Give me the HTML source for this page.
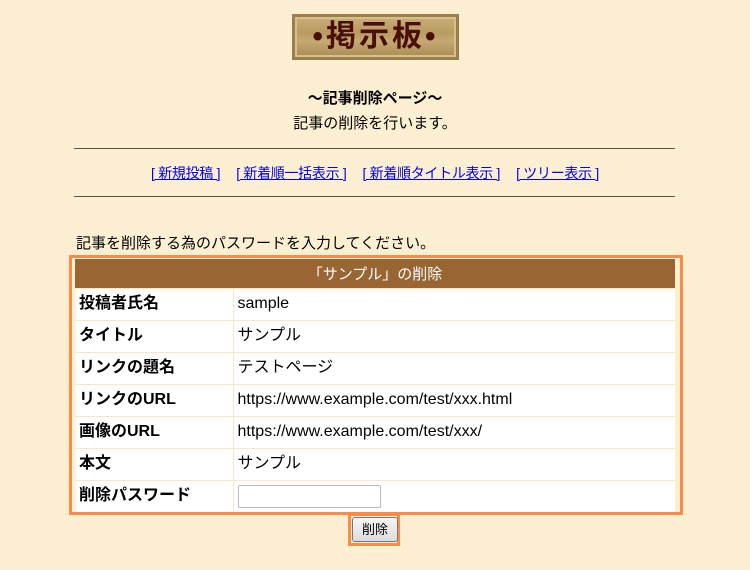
<!DOCTYPE html>
<html><head><meta charset="utf-8">
<style>
*{margin:0;padding:0;box-sizing:border-box}
body{width:750px;height:570px;overflow:hidden;background:#fdf0d2;font-family:"Liberation Sans","Noto Sans CJK JP",sans-serif;color:#000;position:relative;font-size:15px}
.abs{position:absolute}
.logo{left:292px;top:14px;width:167px;height:46px;background:linear-gradient(#c9ad78,#b89a62 40%,#c7aa72 60%,#a88a55);border:3px solid #9c7f4c;box-shadow:inset 0 0 0 2px #d8c08d}
.logo span{position:absolute;left:0;right:0;top:2px;text-align:center;font-size:30px;font-weight:bold;color:#4a0f0a;letter-spacing:3px;white-space:nowrap;line-height:36px}
.c{left:0;width:750px;text-align:center}
hr{position:absolute;left:74px;width:601px;border:0;border-top:1px solid #555}
a{color:#0000ee;text-decoration:underline;font-size:14px;display:inline-block;margin:0 8px;letter-spacing:-0.3px}
.frame{left:69px;top:255px;width:614px;height:260px;border:3px solid #fd8a45}
table{position:absolute;left:75px;top:259px;width:600px;border-collapse:collapse;background:#fff}
th{background:#996633;color:#fff;font-weight:normal;height:29px;font-size:15px}
td{height:32px;border-top:1px solid #fbe6c4;font-size:16px;padding-left:4px;line-height:20px;vertical-align:middle}
td.l{width:158px;font-weight:bold;border-right:1px solid #fbe6c4}
input{width:143px;height:23px;border:1px solid #bbb;border-radius:2px;background:#fff;display:block}
.btnf{left:348px;top:513px;width:52px;height:33px;border:3px solid #fd8a45}
.btn{left:352px;top:517px;width:46px;height:25px;border:1px solid #777;border-radius:3px;background:linear-gradient(#f6f6f6,#dcdcdc);font-size:13px;text-align:center;line-height:23px}
</style></head><body>
<div class="abs logo"><span>•掲示板•</span></div>
<div class="abs c" style="top:87px;font-weight:bold;font-size:15px">～記事削除ページ～</div>
<div class="abs c" style="top:112px">記事の削除を行います。</div>
<hr style="top:148px">
<div class="abs c" style="top:163px;white-space:nowrap"><a>[ 新規投稿 ]</a><a>[ 新着順一括表示 ]</a><a>[ 新着順タイトル表示 ]</a><a>[ ツリー表示 ]</a></div>
<hr style="top:196px">
<div class="abs" style="left:76px;top:232px;font-size:15px">記事を削除する為のパスワードを入力してください。</div>
<div class="abs frame"></div>
<table>
<tr><th colspan="2">「サンプル」の削除</th></tr>
<tr><td class="l">投稿者氏名</td><td>sample</td></tr>
<tr><td class="l">タイトル</td><td>サンプル</td></tr>
<tr><td class="l">リンクの題名</td><td>テストページ</td></tr>
<tr><td class="l">リンクのURL</td><td>https://www.example.com/test/xxx.html</td></tr>
<tr><td class="l">画像のURL</td><td>https://www.example.com/test/xxx/</td></tr>
<tr><td class="l">本文</td><td>サンプル</td></tr>
<tr><td class="l">削除パスワード</td><td><input type="password"></td></tr>
</table>
<div class="abs btnf"></div>
<div class="abs btn">削除</div>
</body></html>
